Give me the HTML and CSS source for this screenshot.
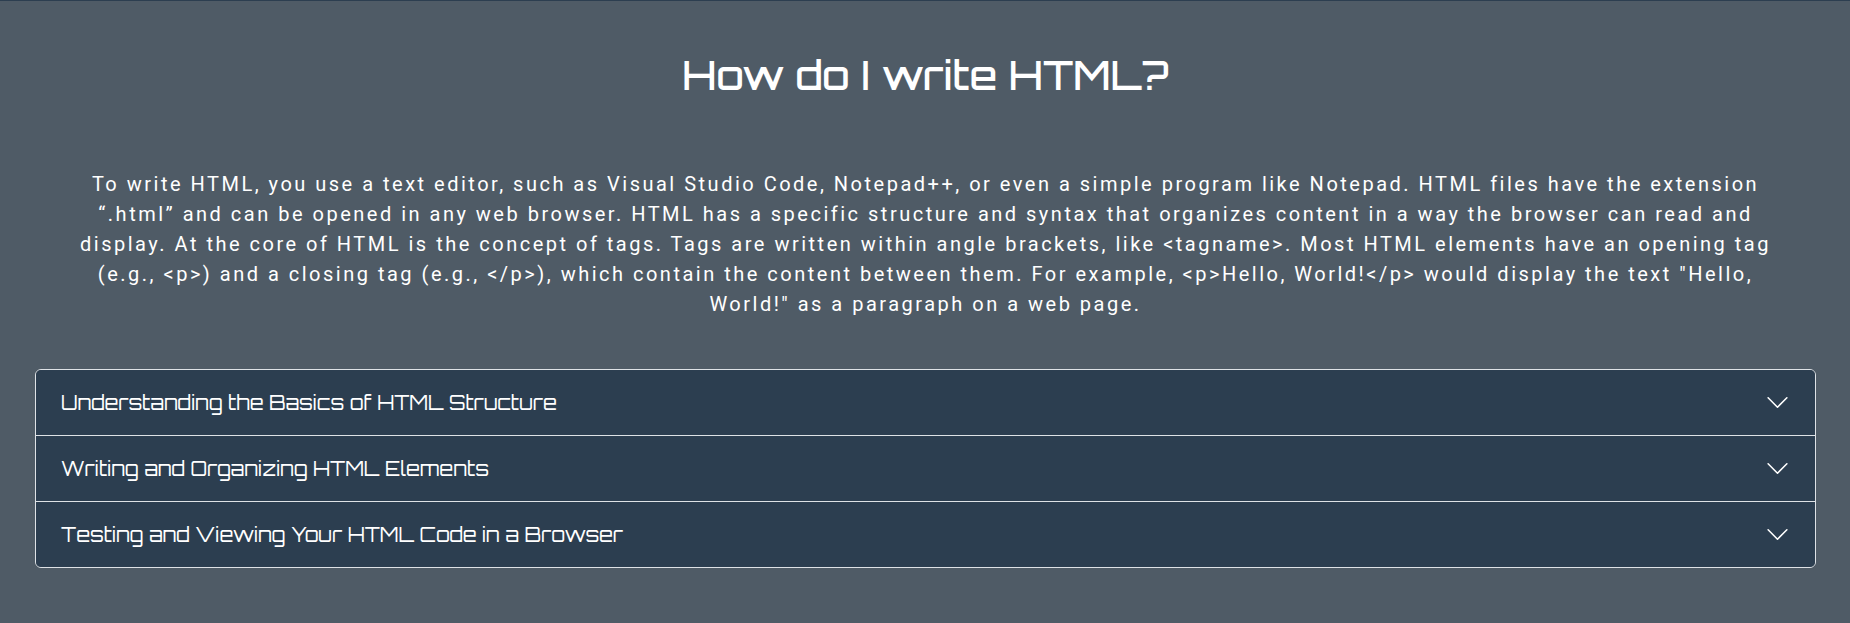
FILE: index.html
```html
<!DOCTYPE html>
<html lang="en"><head><meta charset="utf-8"><title>How do I write HTML?</title><link rel="stylesheet" href="styles.css"></head>
<body>
<section class="guide">
<h1 class="title">How do I write HTML?</h1>
<p class="intro">To write HTML, you use a text editor, such as Visual Studio Code, Notepad++, or even a simple program like Notepad. HTML files have the extension “.html” and can be opened in any web browser. HTML has a specific structure and syntax that organizes content in a way the browser can read and display. At the core of HTML is the concept of tags. Tags are written within angle brackets, like &lt;tagname&gt;. Most HTML elements have an opening tag (e.g., &lt;p&gt;) and a closing tag (e.g., &lt;/p&gt;), which contain the content between them. For example, &lt;p&gt;Hello, World!&lt;/p&gt; would display the text "Hello, World!" as a paragraph on a web page.</p>
<div class="accordion">
<button class="item"><span class="label">Understanding the Basics of HTML Structure</span><svg class="chevron" viewBox="0 0 16 16"><path d="M2 5l6 6 6-6"/></svg></button>
<button class="item"><span class="label">Writing and Organizing HTML Elements</span><svg class="chevron" viewBox="0 0 16 16"><path d="M2 5l6 6 6-6"/></svg></button>
<button class="item"><span class="label">Testing and Viewing Your HTML Code in a Browser</span><svg class="chevron" viewBox="0 0 16 16"><path d="M2 5l6 6 6-6"/></svg></button>
</div>
</section>
</body></html>
```
FILE: styles.css
```css
* { box-sizing: border-box; }
body { margin: 0; background: #4f5b66; color: #fff; font-family: Roboto, sans-serif; }
.guide { height: 623px; border-top: 1px solid #2c3e50; padding: 50px 34px 0 35px; }
.title { margin: 0; height: 48px; text-align: center; font: 500 40px/48px Orbitron, Inter, sans-serif; }
.intro { margin: 70px 0 0; padding: 0 40px; font-size: 20px; line-height: 30px; letter-spacing: 2.5px; text-align: center; }
.accordion { margin-top: 50px; border: 1px solid #dee2e6; border-radius: 6px; overflow: hidden; }
.item { display: flex; align-items: center; justify-content: space-between; width: 100%; height: 65px; padding: 0 25px; border: 0; background: #2c3e50; color: #fff; font: 400 20px Orbitron, Inter, sans-serif; }
.item + .item { height: 66px; border-top: 1px solid #dee2e6; }
.chevron { width: 25px; height: 25px; fill: none; stroke: #fff; stroke-linecap: round; stroke-linejoin: round; }
```
